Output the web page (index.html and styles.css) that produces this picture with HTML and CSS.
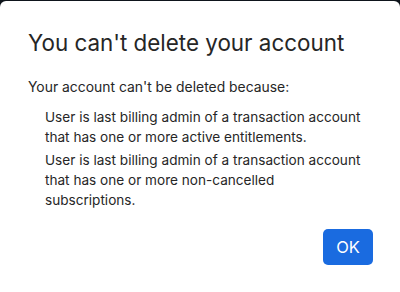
FILE: index.html
```html
<!DOCTYPE html>
<html>
<head>
<meta charset="utf-8">
<link rel="stylesheet" href="styles.css">
</head>
<body>
<div class="modal">
  <h1 class="title">You can't delete your account</h1>
  <p class="lead">Your account can't be deleted because:</p>
  <ul class="reasons">
    <li>User is last billing admin of a transaction account that has one or more active entitlements.</li>
    <li>User is last billing admin of a transaction account that has one or more non-cancelled subscriptions.</li>
  </ul>
  <div class="actions">
    <button class="ok">OK</button>
  </div>
</div>
</body>
</html>
```
FILE: styles.css
```css
html, body {
  margin: 0;
  padding: 0;
  height: 100%;
  overflow: hidden;
}
body {
  background: #0e141b;
  font-family: Inter, "Noto Sans", sans-serif;
  color: #262626;
}
.modal {
  margin-top: 1px;
  background: #ffffff;
  border-radius: 6px;
  height: 300px;
  padding: 28px 28px 0 28px;
  box-sizing: border-box;
}
.title {
  margin: 0;
  font-size: 22.4px;
  font-weight: 400;
  line-height: 28px;
  color: #262626;
}
.lead {
  margin: 20px 0 0 0;
  font-size: 13.9px;
  line-height: 20px;
}
.reasons {
  list-style: none;
  margin: 10px 0 0 0;
  padding: 0 0 0 17px;
  font-size: 13.6px;
  line-height: 20px;
}
.reasons li {
  width: 323px;
  margin-bottom: 3px;
}
.actions {
  display: flex;
  justify-content: flex-end;
  margin-top: 19px;
}
.ok {
  width: 50px;
  height: 36px;
  margin-right: -1px;
  border: none;
  border-radius: 5px;
  background: #1a6be0;
  color: #fff;
  font-family: inherit;
  font-size: 16.5px;
}
```
